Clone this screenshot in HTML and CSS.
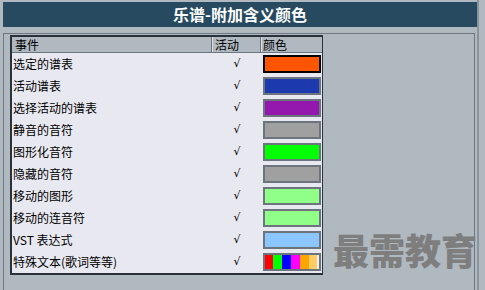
FILE: index.html
```html
<!DOCTYPE html>
<html>
<head>
<meta charset="utf-8">
<link rel="stylesheet" href="styles.css">
</head>
<body>
<div class="window">
  <div class="title">乐谱-附加含义颜色</div>
  <div class="panel">
    <div class="table">
      <div class="head">
        <div class="hc c-event">事件</div>
        <div class="hc c-active">活动</div>
        <div class="hc c-color">颜色</div>
      </div>
      <div class="row"><div class="c-event">选定的谱表</div><div class="c-active">√</div><div class="c-color"><span class="sw sel" style="background:#ff5400"></span></div></div>
      <div class="row"><div class="c-event">活动谱表</div><div class="c-active">√</div><div class="c-color"><span class="sw" style="background:#1c3aae"></span></div></div>
      <div class="row"><div class="c-event">选择活动的谱表</div><div class="c-active">√</div><div class="c-color"><span class="sw" style="background:#9418ae"></span></div></div>
      <div class="row"><div class="c-event">静音的音符</div><div class="c-active">√</div><div class="c-color"><span class="sw" style="background:#a0a0a0"></span></div></div>
      <div class="row"><div class="c-event">图形化音符</div><div class="c-active">√</div><div class="c-color"><span class="sw" style="background:#00ff00"></span></div></div>
      <div class="row"><div class="c-event">隐藏的音符</div><div class="c-active">√</div><div class="c-color"><span class="sw" style="background:#a0a0a0"></span></div></div>
      <div class="row"><div class="c-event">移动的图形</div><div class="c-active">√</div><div class="c-color"><span class="sw" style="background:#90ff88"></span></div></div>
      <div class="row"><div class="c-event">移动的连音符</div><div class="c-active">√</div><div class="c-color"><span class="sw" style="background:#90ff88"></span></div></div>
      <div class="row"><div class="c-event">VST 表达式</div><div class="c-active">√</div><div class="c-color"><span class="sw" style="background:#8cc6ff"></span></div></div>
      <div class="row"><div class="c-event">特殊文本(歌词等等)</div><div class="c-active">√</div><div class="c-color"><span class="sw multi"><i class="s1"></i><i class="s2"></i><i class="s3"></i><i class="s4"></i><i class="s5"></i><i class="s6"></i><i class="s7"></i></span></div></div>
    </div>
  </div>
  <div class="watermark">最需教育</div>
</div>
</body>
</html>
```

FILE: styles.css
```css
html, body {
  margin: 0;
  padding: 0;
  background: #b0b8c0;
  overflow: hidden;
}
body {
  width: 485px;
  height: 290px;
  font-family: "Noto Sans CJK SC", "Liberation Sans", sans-serif;
}
.window {
  position: relative;
  width: 479px;
  height: 290px;
  border-right: 2px solid #8a949c;
  padding-top: 2px;
  box-sizing: border-box;
}
.title {
  margin-left: 3px;
  width: 474px;
  height: 25px;
  background: #284a60;
  color: #ffffff;
  font-size: 16px;
  font-weight: bold;
  line-height: 25px;
  text-align: center;
}
.panel {
  margin-top: 6px;
  margin-left: 3px;
  width: 472px;
  height: 270px;
  box-sizing: border-box;
  border-top: 1px solid #6e7880;
  border-left: 1px solid #6e7880;
  border-right: 1px solid #6e7880;
  padding: 1px 0 0 6px;
}
.table {
  width: 313px;
  box-sizing: border-box;
  border: 2px solid #28323a;
  border-right-width: 1px;
  background: #e8e8f0;
  font-size: 12px;
  color: #000;
}
.head, .row {
  display: grid;
  grid-template-columns: 200px 49px 1fr;
}
.head {
  height: 16px;
  background: #b0b8c0;
  border-bottom: 1px solid #6c767e;
  box-sizing: border-box;
  line-height: 15px;
}
.hc {
  padding-left: 3px;
  border-right: 1px solid #6c767e;
  box-shadow: inset 1px 0 0 #d8dee2;
}
.head .c-event { box-shadow: none; }
.head .c-color { border-right: none; padding-left: 2px; }
.row {
  height: 22px;
  line-height: 22px;
}
.row .c-event {
  padding-left: 1px;
  white-space: nowrap;
}
.row .c-active {
  text-align: center;
  font-family: "DejaVu Sans", sans-serif;
  font-size: 11px;
  padding-left: 1px;
}
.row .c-color {
  display: flex;
  align-items: center;
  padding-left: 2px;
}
.sw {
  display: block;
  width: 58px;
  height: 18px;
  box-sizing: border-box;
  border: 2px solid #6c747e;
}
.sw.sel { border-color: #000; }
.sw.multi {
  display: flex;
}
.sw.multi i { display: block; height: 100%; }
.s1 { width: 8px; background: #ff0000; }
.s2 { width: 9px; background: #00ff00; }
.s3 { width: 9px; background: #0000ff; }
.s4 { width: 9px; background: #ff00ff; }
.s5 { width: 9px; background: #ffa500; }
.s6 { width: 8px; background: #ffcc66; }
.s7 { flex: 1; background: #f0f0f0; }
.watermark {
  position: absolute;
  left: 333px;
  top: 229px;
  font-size: 36px;
  line-height: 40px;
  font-weight: 900;
  color: #7e7e7e;
  white-space: nowrap;
}
```
